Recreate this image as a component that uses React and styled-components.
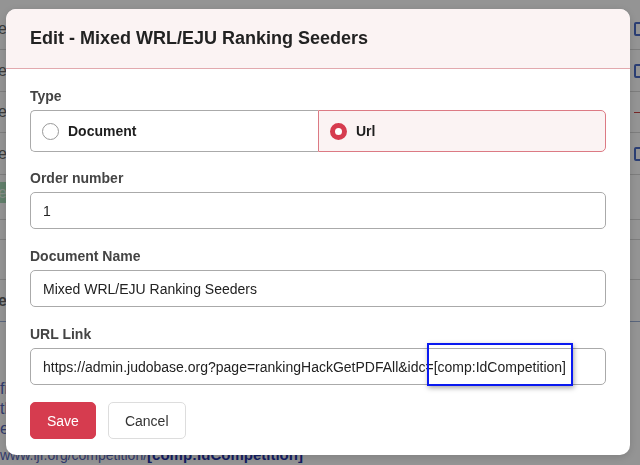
import React from 'react'
import styled, { createGlobalStyle } from 'styled-components'

const Global = createGlobalStyle`
  html, body { margin: 0; padding: 0; }
  body {
    font-family: "Liberation Sans", Arial, sans-serif;
    background: #fff;
    overflow: hidden;
  }
  * { box-sizing: border-box; }
`

/* page behind the dialog */
const Page = styled.div`
  height: 465px;
  overflow: hidden;
  background: #fff;
`
const Table = styled.div`
  display: flex;
  flex-direction: column;
  padding-top: 9px;
`
const Row = styled.div`
  display: flex;
  justify-content: space-between;
  align-items: ${p => (p.$top ? 'flex-start' : 'center')};
  padding-top: ${p => (p.$top ? 7 : 0)}px;
  height: ${p => p.$h || 41}px;
  border-bottom: 1px solid #d8d8d8;
`
const EdgeText = styled.div`
  width: 7px;
  overflow: hidden;
  display: flex;
  justify-content: flex-end;
  white-space: nowrap;
  font-size: 16px;
  color: #666;
`
const Badge = styled.div`
  width: 7px;
  height: 21px;
  overflow: hidden;
  display: flex;
  justify-content: flex-end;
  align-items: center;
  font-size: 16px;
  color: #e6f5ea;
  background: #a8dcb9;
`
const Check = styled.span`
  width: 12px;
  height: 14px;
  margin-right: -6px;
  border: 2px solid #4a6cc8;
  border-radius: 2px;
`
const Dash = styled.span`
  width: 6px;
  height: 1px;
  background: #c44;
`
const Heading = styled.div`
  height: 42px;
  border-bottom: 1px solid #9bb0d8;
  display: flex;
  align-items: center;
  font-size: 26px;
  font-weight: 700;
  color: #333;
`
const LinkLines = styled.div`
  display: flex;
  flex-direction: column;
  padding-top: 24px;
  font-size: 16px;
  color: #5566bb;
  line-height: 20px;
`
const LinkLine = styled.span`
  margin-top: ${p => p.$gap || 0}px;
  white-space: nowrap;
  font-size: ${p => (p.$small ? 14 : 16)}px;
`
const Mono = styled.b`
  color: #2233aa;
  font-size: 15px;
`

/* dialog */
const Overlay = styled.div`
  position: fixed;
  inset: 0;
  background: rgba(0, 0, 0, 0.42);
  display: flex;
  align-items: flex-start;
  padding: 9px 0 0 6px;
`
const Modal = styled.div`
  width: 624px;
  background: #fff;
  border-radius: 10px;
  overflow: hidden;
  box-shadow: 0 2px 10px rgba(0, 0, 0, 0.15);
`
const Header = styled.div`
  height: 60px;
  display: flex;
  align-items: center;
  padding: 0 24px;
  background: #fbf3f3;
  border-bottom: 1px solid #e2a9ae;
`
const Title = styled.h2`
  margin: 0;
  font-size: 18px;
  font-weight: 700;
  color: #222;
`
const Body = styled.div`
  padding: 17px 24px 16px;
  display: flex;
  flex-direction: column;
`
const Field = styled.div`
  display: flex;
  flex-direction: column;
  margin-bottom: ${p => p.$gap || 17}px;
`
const Label = styled.label`
  font-size: 14px;
  line-height: 20px;
  font-weight: 700;
  color: #444;
  margin-bottom: 4px;
`
const RadioGroup = styled.div`
  display: grid;
  grid-template-columns: 1fr 1fr;
  height: 42px;
`
const RadioOption = styled.div`
  display: flex;
  align-items: center;
  gap: 9px;
  padding-left: 11px;
  font-size: 14px;
  font-weight: 700;
  color: #1e1e1e;
  border: 1px solid ${p => (p.$active ? '#dc7a84' : '#aaa')};
  background: ${p => (p.$active ? '#fbf3f3' : '#fff')};
  border-radius: ${p => (p.$active ? '0 5px 5px 0' : '5px 0 0 5px')};
  ${p => !p.$active && 'border-right: none;'}
`
const RadioDot = styled.span`
  width: 17px;
  height: 17px;
  border-radius: 50%;
  border: ${p => (p.$checked ? '5px solid #d63c4f' : '1px solid #999')};
  background: #fff;
  flex-shrink: 0;
`
const InputWrap = styled.div`
  position: relative;
`
const Input = styled.div`
  height: 37px;
  display: flex;
  align-items: center;
  padding: 0 12px;
  border: 1px solid #aaa;
  border-radius: 5px;
  font-size: 14px;
  color: #222;
  white-space: nowrap;
  overflow: hidden;
`
const Highlight = styled.span`
  position: absolute;
  left: 397px;
  top: -5px;
  width: 146px;
  height: 43px;
  border: 2px solid #0a1af0;
  box-shadow: 1px 2px 5px rgba(0, 0, 0, 0.35);
`
const Actions = styled.div`
  display: flex;
  gap: 12px;
`
const Button = styled.button`
  height: 37px;
  padding: 0 16px;
  font-family: inherit;
  font-size: 14px;
  border-radius: 5px;
  border: 1px solid ${p => (p.$primary ? '#d63c4f' : '#ddd')};
  background: ${p => (p.$primary ? '#d63c4f' : '#fff')};
  color: ${p => (p.$primary ? '#fff' : '#333')};
`

const rows = [
  { t: 'Name', h: 41 },
  { t: 'Type', h: 42 },
  { t: 'Date', h: 41, dash: true },
  { t: 'Place', h: 42 },
]

export default function App() {
  return (
    <>
      <Global />
      <Page>
        <Table>
          {rows.map((r, i) => (
            <Row key={i} $h={r.h}>
              <EdgeText>{r.t}</EdgeText>
              {r.dash ? <Dash /> : <Check />}
            </Row>
          ))}
          <Row $h={45} $top>
            <Badge>Active</Badge>
          </Row>
          <Row $h={20} />
          <Row $h={40} />
          <Heading>
            <EdgeText>Create</EdgeText>
          </Heading>
          <LinkLines>
            <LinkLine>&nbsp;&nbsp;&nbsp;v</LinkLine>
            <LinkLine $gap={13}>file</LinkLine>
            <LinkLine>the</LinkLine>
            <LinkLine>ex:</LinkLine>
            <LinkLine $gap={6} $small>
              www.ijf.org/competition/<Mono>[comp:IdCompetition]</Mono>
            </LinkLine>
          </LinkLines>
        </Table>
      </Page>

      <Overlay>
        <Modal>
          <Header>
            <Title>Edit - Mixed WRL/EJU Ranking Seeders</Title>
          </Header>
          <Body>
            <Field $gap={16}>
              <Label>Type</Label>
              <RadioGroup>
                <RadioOption>
                  <RadioDot />
                  Document
                </RadioOption>
                <RadioOption $active>
                  <RadioDot $checked />
                  Url
                </RadioOption>
              </RadioGroup>
            </Field>
            <Field>
              <Label>Order number</Label>
              <Input>1</Input>
            </Field>
            <Field>
              <Label>Document Name</Label>
              <Input>Mixed WRL/EJU Ranking Seeders</Input>
            </Field>
            <Field>
              <Label>URL Link</Label>
              <InputWrap>
                <Input>
                  https://admin.judobase.org?page=rankingHackGetPDFAll&amp;idc=[comp:IdCompetition]
                </Input>
                <Highlight />
              </InputWrap>
            </Field>
            <Actions>
              <Button $primary>Save</Button>
              <Button>Cancel</Button>
            </Actions>
          </Body>
        </Modal>
      </Overlay>
    </>
  )
}
